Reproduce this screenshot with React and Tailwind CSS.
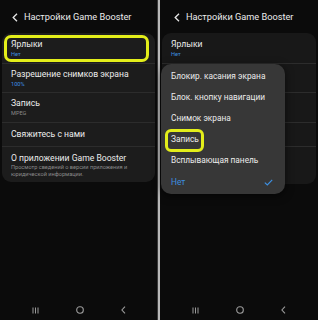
import React from "react";

const font = { fontFamily: "Roboto, 'Noto Sans', sans-serif" };

const Back = ({ className }) => (
  <svg width="6" height="9" viewBox="0 0 6 9" className={className}>
    <path d="M5 0.8 L1.2 4.5 L5 8.2" fill="none" stroke="#e6e6e6" strokeWidth="1.3" />
  </svg>
);

const NavBar = () => (
  <div className="flex h-[20px] items-center justify-center gap-[37px]">
    <svg width="7" height="7" viewBox="0 0 7 7">
      <path d="M1 0.5v6M3.5 0.5v6M6 0.5v6" stroke="#9a9a9a" strokeWidth="1" />
    </svg>
    <svg width="8" height="8" viewBox="0 0 8 8">
      <rect x="0.7" y="0.7" width="6.6" height="6.6" rx="3" fill="none" stroke="#9a9a9a" strokeWidth="1.1" />
    </svg>
    <svg width="5" height="8" viewBox="0 0 5 8">
      <path d="M4 0.6 L0.9 4 L4 7.4" fill="none" stroke="#9a9a9a" strokeWidth="1.1" />
    </svg>
  </div>
);

const Header = ({ left }) => (
  <div className="flex h-[33px] items-center pt-[1px]">
    <Back className={`${left} mr-[6px]`} />
    <span className="text-[9.2px] text-[#ececec]">Настройки Game Booster</span>
  </div>
);

const Item = ({ title, sub, subColor = "text-[#3d8fe0]", h, divider = true }) => (
  <div className={`flex flex-col justify-center px-[9px] ${h} ${divider ? "border-b border-[#2c2c2c]" : ""}`}>
    <div className="text-[8.6px] leading-[11px] text-[#ececec]">{title}</div>
    {sub && <div className={`text-[5.6px] leading-[8px] ${subColor}`}>{sub}</div>}
  </div>
);

const LeftScreen = () => (
  <div className="flex h-[320px] w-[157px] flex-col bg-[#0b0b0b]" style={font}>
    <Header left="ml-[12px]" />
    <div className="relative mx-[2px] rounded-[9px] bg-[#1c1c1c] pb-[4px]">
      <Item title="Ярлыки" sub="Нет" h="h-[31px]" />
      <Item title="Разрешение снимков экрана" sub="100%" h="h-[29px]" />
      <Item title="Запись" sub="MPEG" subColor="text-[#8a8a8a]" h="h-[30px]" />
      <Item title="Свяжитесь с нами" h="h-[24px]" />
      <div className="px-[9px] pt-[6px]">
        <div className="text-[8.6px] leading-[11px] text-[#ececec]">О приложении Game Booster</div>
        <div className="text-[5.6px] leading-[7px] text-[#8a8a8a]">
          Просмотр сведений о версии приложения и юридической информации.
        </div>
      </div>
      <div className="absolute left-[2px] top-[2px] h-[27px] w-[145px] rounded-[7px] border-[3px] border-[#e3ee1a]" />
    </div>
    <div className="flex-1" />
    <NavBar />
  </div>
);

const menu = [
  "Блокир. касания экрана",
  "Блок. кнопку навигации",
  "Снимок экрана",
  "Запись",
  "Всплывающая панель",
];

const RightScreen = () => (
  <div className="relative flex h-[320px] w-[158px] flex-col bg-[#0b0b0b]" style={font}>
    <Header left="ml-[14px]" />
    <div className="mx-[2px] rounded-[9px] bg-[#181818] pb-[4px]">
      <Item title="Ярлыки" sub="Нет" h="h-[31px]" />
      <Item title=" " h="h-[29px]" />
      <Item title=" " h="h-[30px]" />
      <Item title=" " h="h-[24px]" />
      <div className="h-[33px]" />
    </div>
    <div className="flex-1" />
    <NavBar />
    <div className="absolute left-[1px] top-[64px] w-[124px] rounded-[10px] bg-[#373737] pb-[1px] pt-[2px] shadow-[0_2px_8px_rgba(0,0,0,0.6)]">
      {menu.map((m) => (
        <div key={m} className="flex h-[21px] items-center px-[10px] text-[8.3px] text-[#ececec]">
          {m}
        </div>
      ))}
      <div className="flex h-[22px] items-center justify-between pl-[10px] pr-[12px]">
        <span className="text-[8.3px] text-[#3d8fe0]">Нет</span>
        <svg width="9" height="7" viewBox="0 0 9 7">
          <path d="M0.8 3.6 L3.3 6 L8.2 0.8" fill="none" stroke="#3d8fe0" strokeWidth="1.2" />
        </svg>
      </div>
      <div className="absolute left-[4px] top-[65px] h-[23px] w-[39px] rounded-[6px] border-[3px] border-[#e3ee1a]" />
    </div>
  </div>
);

export default function App() {
  return (
    <div className="flex h-[320px] w-[318px] bg-[#0b0b0b]">
      <LeftScreen />
      <div className="w-[1px] bg-[#3a3a3a]" />
      <div className="w-[2px] bg-[#b8b8b8]" />
      <RightScreen />
    </div>
  );
}
